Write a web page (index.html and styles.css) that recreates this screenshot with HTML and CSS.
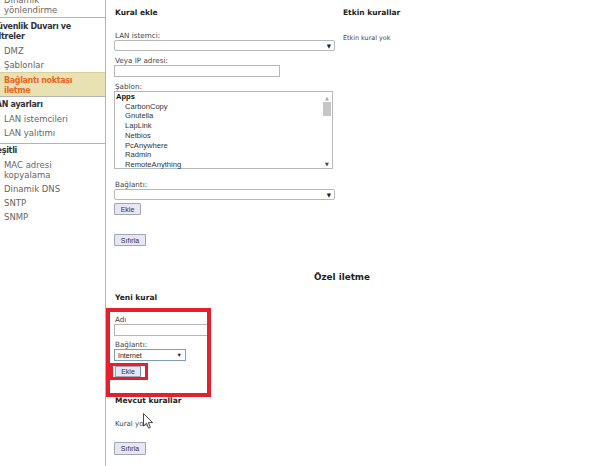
FILE: index.html
```html
<!DOCTYPE html>
<html lang="tr">
<head>
    <meta charset="UTF-8">
    <title>Bağlantı noktası iletme</title>
    <link rel="stylesheet" href="styles.css">
</head>
<body>
<div class="page">
    <div class="sidebar">
        <div class="nav">
            <div class="nav-group first">
                <div class="nav-item two-line">Dinamik<br>yönlendirme</div>
            </div>
            <div class="nav-group tight">
                <div class="nav-title">Güvenlik Duvarı ve<br>Filtreler</div>
                <div class="nav-item">DMZ</div>
                <div class="nav-item">Şablonlar</div>
                <div class="nav-item active">Bağlantı noktası<br>iletme</div>
            </div>
            <div class="nav-group">
                <div class="nav-title lan">LAN ayarları</div>
                <div class="nav-item">LAN istemcileri</div>
                <div class="nav-item">LAN yalıtımı</div>
            </div>
            <div class="nav-group last">
                <div class="nav-title misc">Çeşitli</div>
                <div class="nav-item">MAC adresi<br>kopyalama</div>
                <div class="nav-item">Dinamik DNS</div>
                <div class="nav-item">SNTP</div>
                <div class="nav-item">SNMP</div>
            </div>
        </div>
    </div>

    <div class="main">
        <div class="columns">
            <div class="col-left">
                <h3>Kural ekle</h3>
                <label class="lbl first">LAN istemci:</label>
                <div class="select wide"><span></span><span class="arrow">▼</span></div>

                <label class="lbl">Veya IP adresi:</label>
                <input class="text ip" type="text">

                <label class="lbl">Şablon:</label>
                <div class="listbox">
                    <div class="options">
                        <div class="opt-group">Apps</div>
                        <div class="opt">CarbonCopy</div>
                        <div class="opt">Gnutella</div>
                        <div class="opt">LapLink</div>
                        <div class="opt">Netbios</div>
                        <div class="opt">PcAnywhere</div>
                        <div class="opt">Radmin</div>
                        <div class="opt">RemoteAnything</div>
                    </div>
                    <div class="scrollbar">
                        <span class="sb-up">▲</span>
                        <span class="sb-thumb"></span>
                        <span class="sb-down">▼</span>
                    </div>
                </div>

                <label class="lbl conn">Bağlantı:</label>
                <div class="select wide"><span></span><span class="arrow">▼</span></div>

                <button class="btn add">Ekle</button>
                <button class="btn reset">Sıfırla</button>
            </div>
            <div class="col-right">
                <h3>Etkin kurallar</h3>
                <p class="empty">Etkin kural yok</p>
            </div>
        </div>

        <h2 class="section-title">Özel iletme</h2>

        <h3 class="sub">Yeni kural</h3>
        <label class="lbl name">Adı</label>
        <input class="text name-input" type="text">
        <label class="lbl conn2">Bağlantı:</label>
        <div class="select small"><span>Internet</span><span class="arrow">▼</span></div>
        <button class="btn add2">Ekle</button>

        <h3 class="sub existing">Mevcut kurallar</h3>
        <p class="none">Kural yok</p>
        <button class="btn reset2">Sıfırla</button>

        <div class="mark big"></div>
        <div class="mark small-mark"></div>
        <svg class="cursor" width="11" height="17" viewBox="0 0 11 17">
            <path d="M0.5 0.5 L0.5 13 L3.5 10.2 L5.6 15.2 L7.4 14.4 L5.4 9.6 L9.6 9.6 Z" fill="#fff" stroke="#333" stroke-width="0.9" stroke-linejoin="round"/>
        </svg>
    </div>
</div>
</body>
</html>
```

FILE: styles.css
```css
body {
    margin: 0;
    background-color: #fff;
    font-family: "DejaVu Sans", Verdana, sans-serif;
    color: #333;
    overflow: hidden;
}
.page {
    display: flex;
    height: 466px;
}

/* menu on the left, scrolled a little to the right */
.sidebar {
    width: 105px;
    flex-shrink: 0;
    border-right: 1px solid #e4a77a;
    overflow: hidden;
}
.nav {
    margin-left: -9px;
    margin-top: -5px;
}
.nav-group {
    border-bottom: 1px solid #b4b4b4;
    padding-bottom: 3px;
}
.nav-group.first {
    padding-bottom: 2px;
}
.nav-group.last {
    border-bottom: none;
}
.nav-title {
    font-size: 8px;
    font-weight: bold;
    letter-spacing: -0.3px;
    line-height: 10px;
    color: #333;
    margin-top: 4px;
    margin-bottom: 2px;
}
.nav-title.lan {
    margin-top: 3px;
}
.nav-title.misc {
    margin-top: 2px;
}
.nav-item {
    font-size: 8.5px;
    line-height: 10px;
    padding: 2px 0 2px 13px;
    color: #666;
}
.nav-item.two-line {
    padding-top: 0;
    padding-bottom: 0;
}
.nav-item.active {
    background-color: #e8e1b2;
    border-top: 1px solid #d9cf99;
    color: #e8671f;
    font-weight: bold;
    font-size: 8px;
    letter-spacing: -0.35px;
    line-height: 9.5px;
    padding-top: 3px;
    padding-bottom: 1px;
    margin-bottom: -3px;
}

/* main area */
.main {
    position: relative;
    flex: 1;
    padding-left: 8px;
}
.columns {
    display: flex;
    gap: 8px;
}
.col-left {
    width: 221px;
}
h3 {
    font-size: 7.5px;
    line-height: 10px;
    font-weight: bold;
    color: #222;
    margin: 8px 0 0 1px;
}
.lbl {
    display: block;
    font-size: 7.2px;
    line-height: 10px;
    color: #444;
    padding-top: 1px;
    margin: 4px 0 -1px 1px;
}
.lbl.first {
    margin-top: 12px;
}
.lbl.conn {
    margin-top: 10px;
}
.select {
    box-sizing: border-box;
    display: flex;
    justify-content: space-between;
    align-items: center;
    height: 11px;
    border: 1px solid #b8b8b8;
    border-radius: 2px;
    background-color: #fff;
    font-size: 6.5px;
    padding: 0 3px;
}
.select.wide {
    width: 221px;
}
.arrow {
    font-size: 5.5px;
    color: #222;
}
.text {
    display: block;
    box-sizing: border-box;
    height: 12px;
    border: 1px solid #b8b8b8;
    padding: 0;
    margin: 0;
}
.ip {
    width: 166px;
}
.listbox {
    box-sizing: border-box;
    display: flex;
    width: 219px;
    height: 78px;
    border: 1px solid #b8b8b8;
}
.options {
    flex: 1;
    font-family: "Liberation Sans", Arial, sans-serif;
    font-size: 7.6px;
    line-height: 9.7px;
    color: #333;
}
.opt-group {
    font-weight: bold;
    padding-left: 1px;
    color: #111;
}
.opt {
    padding-left: 10px;
}
.scrollbar {
    width: 10px;
    display: flex;
    flex-direction: column;
    align-items: center;
}
.sb-up {
    font-size: 5px;
    color: #aaa;
    margin-top: 3px;
}
.sb-thumb {
    width: 8px;
    height: 14px;
    background-color: #c6c6c6;
    margin-top: 1px;
}
.sb-down {
    font-size: 5px;
    color: #444;
    margin-top: auto;
    margin-bottom: 1px;
}
.btn {
    display: block;
    box-sizing: border-box;
    height: 12px;
    padding: 0;
    font-family: "Liberation Sans", Arial, sans-serif;
    font-size: 7px;
    color: #333;
    background-color: #e6e6f6;
    border: 1px solid #a4a4b4;
    border-radius: 1px;
}
.btn.add {
    width: 27px;
    margin-top: 3px;
}
.btn.reset {
    width: 32px;
    margin-top: 19px;
}
.col-right h3 {
    margin-left: 0;
}
.empty {
    font-size: 6.4px;
    line-height: 10px;
    color: #444;
    margin: 15px 0 0 0;
}

/* custom forwarding */
.section-title {
    width: 456px;
    text-align: center;
    font-size: 8.8px;
    line-height: 12px;
    font-weight: bold;
    color: #222;
    margin: 25px 0 0 0;
}
h3.sub {
    margin-top: 10px;
}
.lbl.name {
    margin-top: 11px;
}
.name-input {
    width: 94px;
}
.lbl.conn2 {
    margin-top: 3px;
}
.select.small {
    width: 72px;
    height: 12px;
    border-color: #7f9db9;
    border-radius: 0;
    color: #222;
    font-family: "Liberation Sans", Arial, sans-serif;
    font-size: 7px;
}
.btn.add2 {
    width: 26px;
    height: 11px;
    margin-top: 5px;
    margin-left: 1px;
    border-right-color: #6f8fd0;
}
h3.existing {
    margin-top: 19px;
}
.none {
    font-size: 7px;
    line-height: 10px;
    color: #444;
    margin: 13px 0 0 1px;
}
.btn.reset2 {
    width: 32px;
    height: 13px;
    margin-top: 13px;
}

/* red annotation frames drawn over the form */
.mark {
    position: absolute;
    box-sizing: border-box;
    border: 4px solid #e3202c;
}
.mark.big {
    left: 0;
    top: 308px;
    width: 105px;
    height: 89px;
}
.mark.small-mark {
    left: 4px;
    top: 363px;
    width: 38px;
    height: 17px;
    border-width: 3px;
}
.cursor {
    position: absolute;
    left: 37px;
    top: 413px;
}
```
